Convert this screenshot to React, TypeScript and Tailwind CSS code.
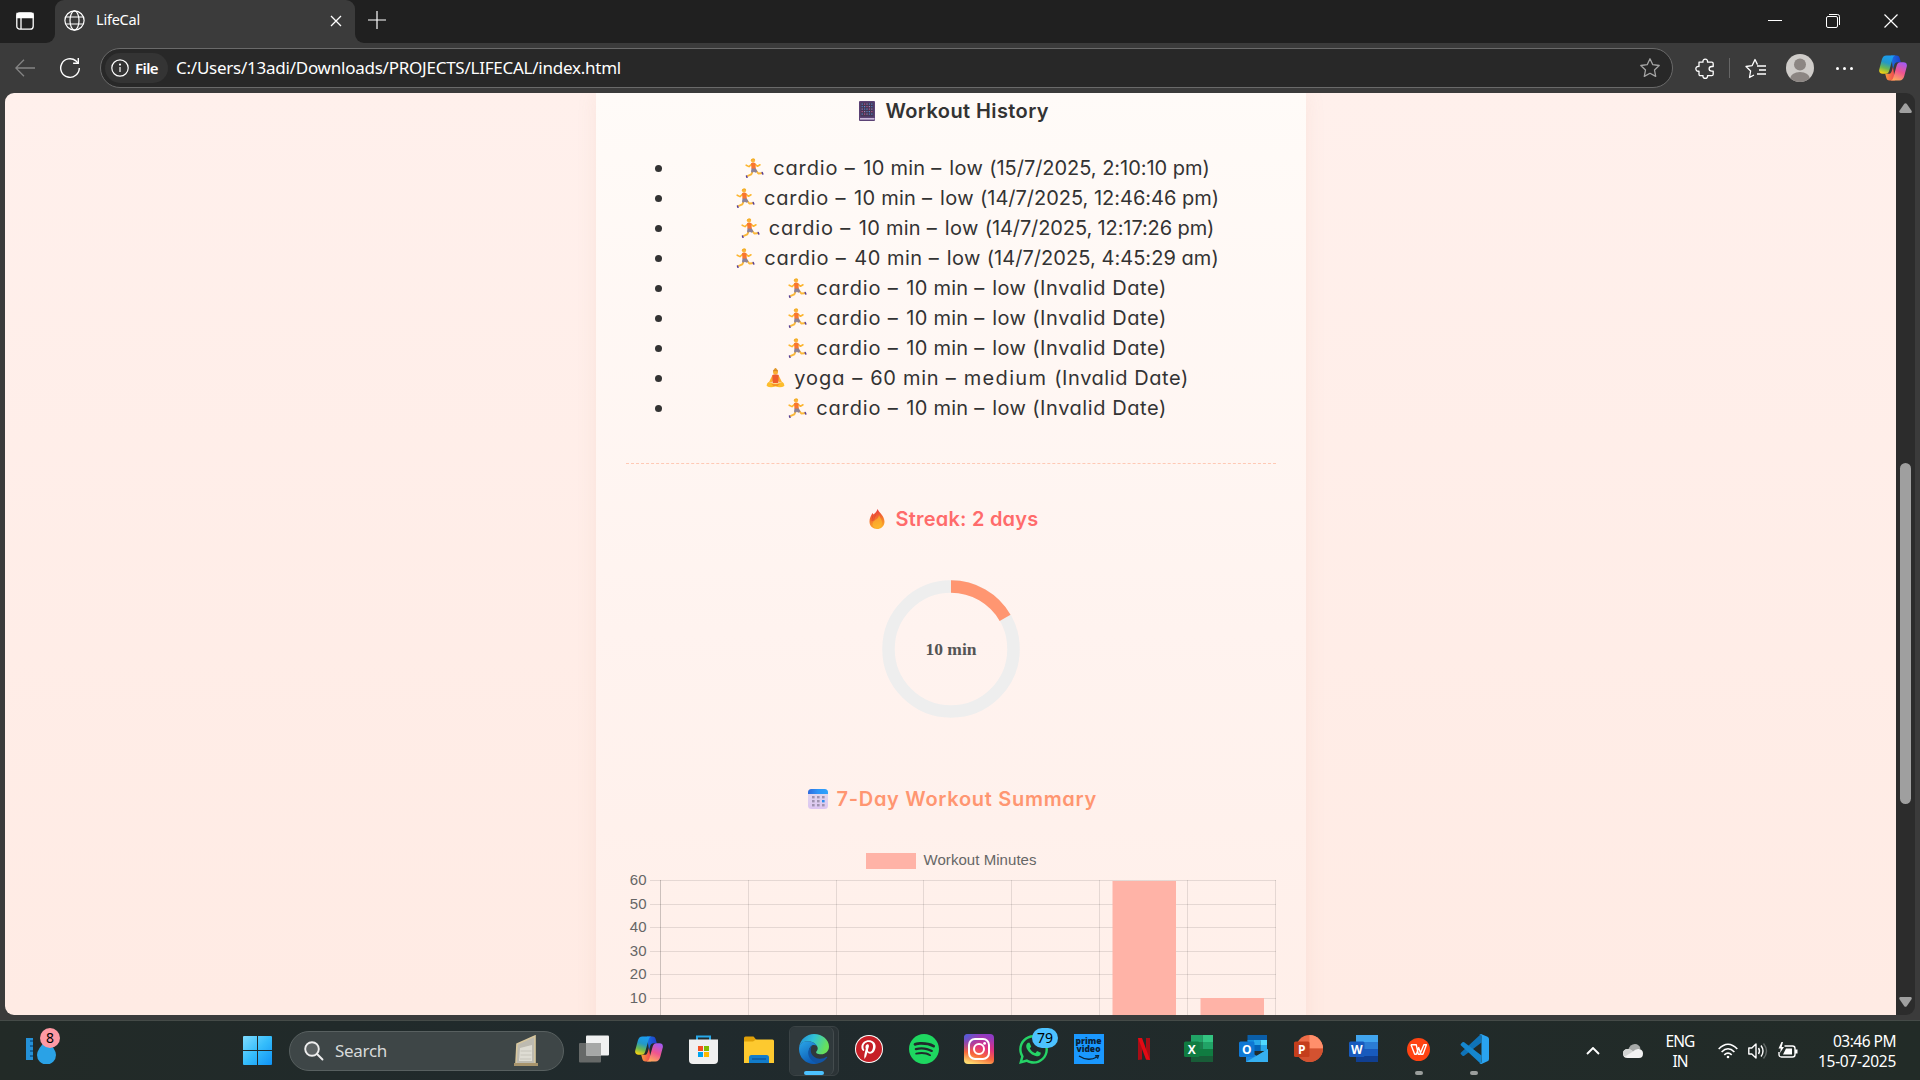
import React, { useLayoutEffect, useRef, useState } from "react";
import { SiSpotify } from "react-icons/si";
import { FaPinterestP, FaWhatsapp } from "react-icons/fa";

/* Text set to an exact measure by adjusting its tracking. */
function Fit({ w, children, className = "" }: { w: number; children: string; className?: string }) {
  const ref = useRef<HTMLSpanElement>(null);
  const [tracking, setTracking] = useState(0);
  useLayoutEffect(() => {
    if (ref.current) {
      const natural = ref.current.getBoundingClientRect().width;
      setTracking((w - natural) / children.length);
    }
  }, []);
  return (
    <span ref={ref} className={`inline-block shrink-0 whitespace-pre ${className}`} style={{ letterSpacing: tracking }}>
      {children}
    </span>
  );
}

const ui = "font-['Noto_Sans','Open_Sans',sans-serif]";
const body = "font-['Inter',sans-serif] [font-feature-settings:'cv11']";

function Runner() {
  return (
    <svg width="19" height="20" viewBox="0 0 19 20" className="shrink-0" fill="none">
      <path d="M8 12.500 6.300 16.300 2.800 17.800" stroke="#fbb83a" strokeWidth="1.900" strokeLinecap="round" strokeLinejoin="round" />
      <path d="M11 12.500 13.300 15.500 16.300 15.300" stroke="#fbb83a" strokeWidth="1.900" strokeLinecap="round" strokeLinejoin="round" />
      <path d="M6.500 6.300 4 8.600 1.200 7.200M10.500 6.500l2 1.800L15 6.800" stroke="#fcb62f" strokeWidth="1.600" strokeLinecap="round" strokeLinejoin="round" />
      <path d="M6 5.200q2-1.200 4.500 0l.3 5.800H6.500z" fill="#f9752f" />
      <path d="M6.500 10.500h4.300l1.700 3-2 1.300-1.700-1-1.800 1-1-1.300z" fill="#8d8296" />
      <path d="M1.500 18 2 19.400M17.200 14.500l.6 1.600" stroke="#5a3f91" strokeWidth="1.500" strokeLinecap="round" />
      <circle cx="8" cy="2.600" r="2.100" fill="#fbb43f" />
      <path d="M5.800 2.800C5.600.5 9.600-.4 10.200 2L8 1.900z" fill="#f3b02c" />
    </svg>
  );
}

function Yoga() {
  return (
    <svg width="19" height="20" viewBox="0 0 19 20" className="shrink-0">
      <path d="M6.500 7 2.800 14.500h3.200L8 11zM12.500 7l3.700 7.500H13L11 11z" fill="#fcb02f" />
      <path d="M6.300 7q3.200-1.600 6.400 0l-.4 8H6.700z" fill="#ee5d2c" />
      <path d="M2.500 14q7 3 14 0 2.300 2 1.700 4-3 2.300-8.700.6-5.700 1.700-8.700-.6-.6-2 1.700-4z" fill="#fdbd2c" />
      <path d="M5 15.500q4.500 1.500 9 0l-2.500 2.500h-4z" fill="#f79324" />
      <circle cx="9.500" cy="3.900" r="2.500" fill="#fbb030" />
      <path d="M7 3.600a2.500 2.500 0 0 1 5 0q-2.500-1.200-5 0z" fill="#d78a26" />
      <circle cx="9.500" cy="1.200" r="1.100" fill="#e3992a" />
    </svg>
  );
}

function Book() {
  return (
    <svg width="16" height="20" viewBox="0 0 16 20" className="shrink-0">
      <rect width="16" height="20" rx="1" fill="#5b4275" />
      <rect x="1" y="17.200" width="14.500" height="1.300" fill="#e6d7f3" />
      <rect x="1.500" y="1.500" width="13" height="14" fill="#453655" />
      {[2.5, 5, 7.5, 10, 12.5].map((y, i) =>
        [2.6, 5, 7.4, 9.8, 12.2].map((x, j) => (
          <rect key={`${x}-${y}`} x={x} y={y} width="1.200" height="1.200" fill={["#5b8fd0", "#b9578c", "#9a86b8", "#4e7fc4"][(i * 3 + j) % 4]} />
        )),
      )}
    </svg>
  );
}

function Fire() {
  return (
    <svg width="16" height="20" viewBox="0 0 16 20" className="shrink-0">
      <defs>
        <linearGradient id="fire" x1="0.400" y1="0" x2="0.600" y2="1">
          <stop offset="0" stopColor="#e8363f" />
          <stop offset=".5" stopColor="#f4742d" />
          <stop offset="1" stopColor="#fdb52b" />
        </linearGradient>
      </defs>
      <path d="M8.500 0C10 3.500 15.500 7 15.500 12.700 15.500 17.200 12 20 8 20S.5 17.200.5 12.500C.5 9 2 6.500 3.500 4l1 1.500C6.500 4 8 2 8.500 0z" fill="url(#fire)" />
      <path d="M10 6c1 3 3.500 5 3 8.500-.5 3-2.500 4.500-5 4.500s-4.500-1.500-4.500-4 2-3.500 3.500-4.500S9.800 8 10 6z" fill="#fdbf2d" opacity=".6" />
      <path d="M4.200 6.500C3.500 8.500 3 10 3.200 12M6.800 5.500C5.500 8 4.600 9.500 4.800 11.500" stroke="#e2452f" strokeWidth=".9" fill="none" />
    </svg>
  );
}

function Calendar() {
  return (
    <svg width="20" height="20" viewBox="0 0 20 20" className="shrink-0">
      <defs>
        <linearGradient id="calTop"><stop stopColor="#2f6bdc" /><stop offset=".5" stopColor="#2e95f8" /><stop offset="1" stopColor="#2ea3fb" /></linearGradient>
        <linearGradient id="calBody" x2="0" y2="1"><stop stopColor="#e3dcec" /><stop offset="1" stopColor="#dcc5f2" /></linearGradient>
      </defs>
      <rect width="20" height="20" rx="3.500" fill="url(#calBody)" />
      <path d="M0 5V3.500A3.500 3.500 0 0 1 3.500 0h13A3.500 3.500 0 0 1 20 3.500V5z" fill="url(#calTop)" />
      {[7, 11, 15].map((y) => [4, 9, 14].map((x) => <rect key={`${x}-${y}`} x={x} y={y} width="2.600" height="2.400" fill={x === 14 && y === 11 ? "#2d8ff0" : "#a093b0"} />))}
    </svg>
  );
}

function Copilot({ id }: { id: string }) {
  return (
    <svg width="28" height="26" viewBox="0 0 28 26">
      <defs>
        <linearGradient id={`${id}a`} x1="0.600" y1="0" x2="0.300" y2="1">
          <stop offset="0" stopColor="#1b9df2" /><stop offset=".4" stopColor="#2398c8" /><stop offset=".7" stopColor="#6bb852" /><stop offset="1" stopColor="#f7d211" />
        </linearGradient>
        <linearGradient id={`${id}b`} x1="0.700" y1="0" x2="0.300" y2="1">
          <stop offset="0" stopColor="#a45af2" /><stop offset=".5" stopColor="#f0548f" /><stop offset="1" stopColor="#fdab5c" />
        </linearGradient>
        <linearGradient id={`${id}c`} x2="1"><stop stopColor="#1c6fe0" /><stop offset="1" stopColor="#1d3fc9" /></linearGradient>
        <linearGradient id={`${id}d`} x2="1"><stop stopColor="#f89a3a" /><stop offset="1" stopColor="#ee4253" /></linearGradient>
      </defs>
      <path d="M12 .5h5.500c2 0 2.800 1.200 3.300 3l1 3.700h-3.500c-1.600 0-2.500 1-3 2.600l-1.300 4.200z" fill={`url(#${id}c)`} />
      <path d="M16 25.500h-5.500c-2 0-2.800-1.200-3.300-3l-1-3.700h3.500c1.600 0 2.500-1 3-2.600L14 12z" fill={`url(#${id}d)`} />
      <path d="M7.500.5h9c-1.700.3-2.400 1.500-2.900 3.200L10.300 15.500c-.6 2-1.500 3.300-3.600 3.300H3.500c-2.600 0-3.900-1.800-3.200-4.600l2.500-9.500C3.500 2 5 .5 7.500.5z" fill={`url(#${id}a)`} />
      <path d="M20.500 25.500h-9c1.700-.3 2.400-1.500 2.900-3.200l3.300-11.800c.6-2 1.500-3.300 3.600-3.300h3.200c2.600 0 3.900 1.800 3.200 4.600l-2.500 9.500c-.7 2.700-2.200 4.200-4.700 4.200z" fill={`url(#${id}b)`} />
    </svg>
  );
}

function Star({ color }: { color: string }) {
  return (
    <svg width="22" height="22" viewBox="0 0 22 22" fill="none" stroke={color} strokeWidth="1.300" strokeLinejoin="round">
      <path d="m11 1.800 2.800 5.900 6.400.8-4.700 4.500 1.200 6.400-5.700-3.100-5.700 3.100 1.200-6.400L1.800 8.500l6.400-.8z" />
    </svg>
  );
}

function TitleBar() {
  return (
    <div className="flex h-[43px] shrink-0 bg-[#3b3b3b]">
      <div className="flex w-[55px] items-center rounded-br-[9px] bg-[#202020] pl-4 pb-[2px]">
        <svg width="18" height="18" viewBox="0 0 18 18" fill="none" stroke="#fff" strokeWidth="1.300">
          <rect x=".8" y=".8" width="16.400" height="16.400" rx="3" />
          <path d="M1 1.500h16v4H1z" fill="#fff" />
          <path d="M5 5v12" />
        </svg>
      </div>
      <div className="flex bg-[#202020]">
        <div className="flex h-[43px] w-[300px] items-center rounded-t-[9px] bg-[#3b3b3b] pb-[3px]">
          <svg width="21" height="21" viewBox="0 0 21 21" fill="none" stroke="#fff" strokeWidth="1.200" className="ml-[9px]">
            <circle cx="10.500" cy="10.500" r="9.600" />
            <ellipse cx="10.500" cy="10.500" rx="4.500" ry="9.600" />
            <path d="M1.700 7h17.600M1.700 14h17.600" />
          </svg>
          <Fit w={44} className={`${ui} ml-[11px] text-[14.500px] text-white`}>LifeCal</Fit>
          <svg width="12" height="12" viewBox="0 0 12 12" stroke="#fff" strokeWidth="1.300" className="mt-[2px] mr-[13px] ml-auto"><path d="m1 1 10 10M11 1 1 11" /></svg>
        </div>
      </div>
      <div className="flex flex-1 items-center rounded-bl-[9px] bg-[#202020] pb-[3px]">
        <svg width="18" height="18" viewBox="0 0 18 18" stroke="#fff" strokeWidth="1.200" className="ml-[13px]"><path d="M9 0v18M0 9h18" /></svg>
        <div className="mr-[22px] ml-auto flex items-center gap-[44px]">
          <svg width="14" height="14" viewBox="0 0 14 14" stroke="#fff"><path d="M0 7.500h14" /></svg>
          <svg width="14" height="14" viewBox="0 0 14 14" stroke="#fff" fill="none" className="mt-[2px]"><rect x=".5" y="2.500" width="11" height="11" rx="1.500" /><path d="M3 .5h8.500a2 2 0 0 1 2 2V11" /></svg>
          <svg width="14" height="14" viewBox="0 0 14 14" stroke="#fff" strokeWidth="1.200" className="mt-[2px]"><path d="m.5.5 13 13M13.500.5l-13 13" /></svg>
        </div>
      </div>
    </div>
  );
}

function Toolbar() {
  return (
    <div className="flex h-[50px] shrink-0 items-center bg-[#3b3b3b]">
      <svg width="20" height="18" viewBox="0 0 20 18" fill="none" stroke="#858585" strokeWidth="1.300" className="ml-[15px]"><path d="M9 .8.8 9 9 17.200M1 9h19" /></svg>
      <svg width="22" height="22" viewBox="0 0 22 22" fill="none" stroke="#fff" strokeWidth="1.400" className="ml-[24px]">
        <path d="M20.300 11A9.300 9.300 0 1 1 17 3.900L19 6" /><path d="M19.300 1v5.200h-5.200" />
      </svg>
      <div className="ml-[19px] flex h-10 w-[1573px] items-center rounded-full border border-[#6a6a6a] bg-[#282828] pl-1">
        <div className="flex h-[30px] w-[63px] items-center rounded-full bg-[#343434] pl-[6px]">
          <svg width="18" height="18" viewBox="0 0 18 18" fill="none" stroke="#fff" strokeWidth="1.200"><circle cx="9" cy="9" r="8.200" /><path d="M9 8v5" /><circle cx="9" cy="5.600" r=".5" /></svg>
          <Fit w={23} className={`${ui} ml-[6px] text-[15px] font-semibold text-white`}>File</Fit>
        </div>
        <Fit w={445} className={`${ui} ml-2 text-[17px] text-white`}>C:/Users/13adi/Downloads/PROJECTS/LIFECAL/index.html</Fit>
        <div className="mr-[11px] ml-auto"><Star color="#a5a5a5" /></div>
      </div>
      <svg width="21" height="21" viewBox="0 0 21 21" fill="none" stroke="#fff" strokeWidth="1.300" strokeLinejoin="round" className="ml-[22px]">
        <path d="M4 4.200h4c-.8-4.200 5.300-4.200 4.500 0h4.200q1.500 0 1.500 1.500v2.800h-1.400c-3.600 0-3.600 4.700 0 4.700h1.400v3q0 1.500-1.500 1.500h-4.200c.8 3.500-5.300 3.500-4.500 0H5.500q-1.500 0-1.500-1.500v-3c-4.200.8-4.200-5.500 0-4.700z" />
      </svg>
      <div className="ml-[13px] h-5 w-px bg-[#666]" />
      <svg width="21" height="21" viewBox="0 0 21 21" fill="none" stroke="#fff" strokeWidth="1.300" strokeLinejoin="round" className="ml-[15px]">
        <path d="M9 17 4.500 19.500 5.600 13 1 8.500l6.200-.9L10 1.500l2.500 5.100M12 8h9M14 12h7M12 16h9" />
      </svg>
      <svg width="28" height="28" viewBox="0 0 28 28" className="ml-[20px]">
        <clipPath id="avatar"><circle cx="14" cy="14" r="14" /></clipPath>
        <g clipPath="url(#avatar)"><rect width="28" height="28" fill="#cfccc9" /><circle cx="14" cy="10.500" r="6" fill="#8c8683" /><ellipse cx="14" cy="25" rx="10" ry="7" fill="#8c8683" /></g>
      </svg>
      <div className="ml-[22px] flex gap-1">
        <i className="size-[3px] rounded-full bg-white" /><i className="size-[3px] rounded-full bg-white" /><i className="size-[3px] rounded-full bg-white" />
      </div>
      <div className="ml-[26px]"><Copilot id="tb" /></div>
    </div>
  );
}

type Piece = [string, number];

const cardio = (minutes: string, w: number, tail: string, tailW: number): Piece[] => [
  ["cardio ", 71.5], ["– ", 18.5], [`${minutes} min `, w], ["– ", 18], ["low ", 40], [tail, tailW],
];

const invalid = cardio("10", 68, "(Invalid Date)", 134.5);

const history: { pieces: Piece[]; yoga?: boolean }[] = [
  { pieces: cardio("10", 68, "(15/7/2025, 2:10:10 pm)", 220.5) },
  { pieces: cardio("10", 68, "(14/7/2025, 12:46:46 pm)", 239) },
  { pieces: cardio("10", 68, "(14/7/2025, 12:17:26 pm)", 229.5) },
  { pieces: cardio("40", 74.5, "(14/7/2025, 4:45:29 am)", 232) },
  { pieces: invalid },
  { pieces: invalid },
  { pieces: invalid },
  { pieces: [["yoga ", 58], ["– ", 18], ["60 min ", 75.5], ["– ", 18], ["medium ", 90.5], ["(Invalid Date)", 134.5]], yoga: true },
  { pieces: invalid },
];

function SummaryChart() {
  const ys = [34.5, 58.5, 81.5, 105.5, 128.5, 152.5, 175.5];
  const xs = [34.5, 122.5, 210.5, 297.5, 385.5, 473.5, 561.5, 649.5];
  return (
    <svg width="650" height="240" viewBox="0 0 650 240" className="block font-['Liberation_Sans',sans-serif] text-[15px]" fill="#666">
      <rect x="240" y="7" width="50" height="16" fill="#ffb3a7" />
      <text x="297.500" y="19" textLength="113">Workout Minutes</text>
      {ys.map((y, i) => (
        <g key={y}>
          <path d={`M24 ${y}H650`} stroke="#000" strokeOpacity=".1" />
          <text x="20.500" y={y + 4.5} textAnchor="end">{60 - i * 10}</text>
        </g>
      ))}
      {xs.map((x, i) => <path key={x} d={`M${x} 34V185`} stroke="#000" strokeOpacity={i === 0 ? 0.2 : 0.1} />)}
      <rect x="486.500" y="35" width="63.500" height="141" fill="#ffb3a7" />
      <rect x="574.500" y="152" width="63.500" height="24" fill="#ffb3a7" />
    </svg>
  );
}

function Page() {
  return (
    <div className="flex h-[922px] shrink-0 bg-[#3b3b3b] pr-[5px] pl-[5px]">
      <div className="flex w-[1891px] justify-center overflow-hidden rounded-l-[9px] bg-linear-to-b from-[#fff0ec] to-[#ffebe4]">
        <div className={`${body} h-[1200px] w-[710px] bg-linear-to-b from-[#fffbf8] via-[#fff3ef] via-45% to-[#ffece5] px-[30px] pt-[3px] text-[20px] leading-[30px] text-[#333] shadow-[0_0_20px_rgba(200,120,90,0.09)]`}>
          <div className="flex h-[30px] items-center gap-[10px] pl-[233px]">
            <Book /><Fit w={163.5} className="ml-px font-semibold">Workout History</Fit>
          </div>
          <ul className="mt-[27px]">
            {history.map((h, i) => (
              <li key={i} className="flex h-[30px] items-center pl-[29px]">
                <i className="size-[7px] rounded-full bg-[#333]" />
                <div className="flex flex-1 items-center justify-center gap-[9px] pl-[18px]">
                  {h.yoga ? <Yoga /> : <Runner />}
                  <span className="flex">{h.pieces.map(([text, w], k) => <Fit key={k} w={w}>{text}</Fit>)}</span>
                </div>
              </li>
            ))}
          </ul>
          <div className="mt-[40px] border-t border-dashed border-[#ffc9b5]" />
          <div className="mt-[40px] flex h-[30px] items-center gap-[11px] pl-[243px] text-[#ff6b6b]">
            <Fire /><Fit w={143} className="font-semibold">Streak: 2 days</Fit>
          </div>
          <svg width="150" height="150" viewBox="0 0 150 150" className="mx-auto mt-[40px]" fill="none" strokeWidth="12.500">
            <circle cx="75" cy="75" r="62.500" stroke="#eee" />
            <path d="M75 12.500A62.500 62.500 0 0 1 129.100 43.750" stroke="#ff9671" />
            <text x="49.500" y="80.500" textLength="51" stroke="none" fill="#555" className="font-['Liberation_Serif',serif] text-[17.500px] font-bold">10 min</text>
          </svg>
          <div className="mt-[60px] flex h-[30px] items-center gap-[9px] pl-[182px] text-[#ff9671]">
            <Calendar /><Fit w={260.5} className="font-semibold">7-Day Workout Summary</Fit>
          </div>
          <div className="mt-[32px]"><SummaryChart /></div>
        </div>
      </div>
      <div className="flex w-[19px] flex-col items-center rounded-r-[9px] bg-[#2c2c2c] pt-[10px] pb-[8px]">
        <svg width="13" height="10" viewBox="0 0 13 10" fill="#a0a0a0"><path d="M5.300.8q1.200-1.300 2.400 0l5 7.200q.4 2-1.200 2h-10Q0 10 .3 8z" /></svg>
        <div className="mt-[350px] h-[341px] w-[11px] rounded-full bg-[#9f9f9f]" />
        <svg width="13" height="10" viewBox="0 0 13 10" fill="#a0a0a0" className="mt-auto"><path d="M5.300 9.200q1.200 1.300 2.400 0l5-7.200Q13 0 11.500 0h-10Q0 0 .3 2z" /></svg>
      </div>
    </div>
  );
}

function Office({ letter, tile, children }: { letter: string; tile: string; children: React.ReactNode }) {
  return (
    <svg width="30" height="28" viewBox="0 0 30 28" className="font-['Open_Sans',sans-serif] text-[12px] font-bold">
      {children}
      <rect x="0" y="6.500" width="15.500" height="15.500" rx="1.500" fill={tile} />
      <text x="7.700" y="18.600" textAnchor="middle" fill="#fff">{letter}</text>
    </svg>
  );
}

function Edge() {
  return (
    <svg width="30" height="30" viewBox="0 0 30 30">
      <defs>
        <linearGradient id="edgeTop" x2="1" y2=".3"><stop stopColor="#2389d8" /><stop offset=".5" stopColor="#30c3d8" /><stop offset="1" stopColor="#67e05a" /></linearGradient>
        <linearGradient id="edgeBody" x2="0.500" y2="1"><stop stopColor="#2aa6e8" /><stop offset="1" stopColor="#0d5cb5" /></linearGradient>
      </defs>
      <path d="M.2 13C1.200 5.500 7.500 0 15 0c8.500 0 15 6 15 12.500 0 4.700-3.600 7.800-8 7.800-3.800 0-5.600-1.500-4.600-2.800 1.500-1.800 1.700-3.300.8-5C16.500 9 12.500 7.300 8.500 7.300 4.500 7.300 1.500 9.500.2 13z" fill="url(#edgeTop)" />
      <path d="M0 15C0 9.800 4 7.300 8.500 7.300c4.300 0 8 2 9.600 4.800-1.600-1.300-3.600-1.500-5.200-.7-5.500 3-3.600 14.800 6.400 17.900-1.400.5-2.800.7-4.300.7C6.500 30 0 23.300 0 15z" fill="url(#edgeBody)" />
      <path d="M12.900 11.400c-2.700 4.800-.7 12.600 7.600 13.300 2.700.2 5-.6 7-1.900.6-.4 1 .1.700.6-2 3-5 5.200-8.900 5.900C9.800 27.600 5.700 17.500 12.900 11.400z" fill="#1254a3" />
    </svg>
  );
}

function TaskIcons() {
  const icons = [
    <svg width="30" height="28" viewBox="0 0 30 28"><rect y="8" width="22" height="19.500" rx="1" fill="#666968" /><rect x="7" y=".5" width="23" height="20" rx="1" fill="#f0f1f1" /><path d="M7 8h15v12.500H7z" fill="#a6a8a7" /></svg>,
    <Copilot id="task" />,
    <svg width="29" height="29" viewBox="0 0 29 29"><path d="M8 6V1.500h13V6" fill="none" stroke="#28a8e8" strokeWidth="2" /><path d="M0 4.500h29V25q0 4-4 4H4q-4 0-4-4z" fill="#f0f0f0" /><path d="M9 11h5v5H9z" fill="#f25022" /><path d="M15 11h5v5h-5z" fill="#7fba00" /><path d="M9 17h5v5H9z" fill="#00a4ef" /><path d="M15 17h5v5h-5z" fill="#ffb900" /></svg>,
    <svg width="30" height="27" viewBox="0 0 30 27"><path d="M0 2Q0 .5 1.500.5h8L12.500 4v6H0z" fill="#dfa008" /><path d="M0 5.500h9l3-2h16.500Q30 3.500 30 5v22H0z" fill="#fdc92f" /><path d="M5 27v-5.500Q5 19 7.500 19h15q2.500 0 2.500 2.500V27z" fill="#127cca" /><path d="M8 23h14" stroke="#0a4f94" strokeWidth="1.200" /></svg>,
    <Edge />,
    <span className="flex size-7 items-center justify-center rounded-full bg-white"><span className="flex size-[26px] items-center justify-center rounded-full bg-[#c61f27]"><FaPinterestP size={19} color="#fff" /></span></span>,
    <SiSpotify size={30} color="#1ed760" />,
    <svg width="30" height="30" viewBox="0 0 30 30">
      <defs>
        <linearGradient id="ig" x1=".3" y1="1" x2=".6" y2="0"><stop stopColor="#fedc70" /><stop offset=".3" stopColor="#f8683a" /><stop offset=".6" stopColor="#e0317f" /><stop offset="1" stopColor="#8f3bc4" /></linearGradient>
        <radialGradient id="igBlue" cx="0" cy="0" r=".6"><stop stopColor="#4361e0" /><stop offset="1" stopColor="#4361e0" stopOpacity="0" /></radialGradient>
      </defs>
      <rect width="30" height="30" rx="4" fill="url(#ig)" /><rect width="30" height="30" rx="4" fill="url(#igBlue)" />
      <g fill="none" stroke="#fff" strokeWidth="2"><rect x="5" y="5" width="20" height="20" rx="6" /><circle cx="15" cy="15" r="5" /></g><circle cx="20.600" cy="9.400" r="1.400" fill="#fff" />
    </svg>,
    <span className="relative"><FaWhatsapp size={33} color="#25d366" /><span className="absolute -top-[5px] left-[15px] flex h-5 w-[26px] items-center justify-center rounded-full bg-[#4cc2ff] text-[14px] text-black">79</span></span>,
    <span className="flex size-[30px] flex-col items-center bg-[#1a98ff] pt-[3px] text-[8.500px] leading-[8px] font-black text-[#0b2135]"><span>prime</span><span>video</span><svg width="22" height="6" viewBox="0 0 22 6" fill="none" stroke="#0b2135" strokeWidth="1.300" className="mt-[2px]"><path d="M1 1q9 6 18 1M17 .8l3.500-.2-1 3" /></svg></span>,
    <svg width="12" height="22" viewBox="0 0 12 22"><path d="M0 0h4v21.500L0 22zM8 0h4v22l-4-.5z" fill="#a80d16" /><path d="M0 0h4l8 22-4-.5z" fill="#e50914" /></svg>,
    <Office letter="X" tile="#107c41"><path d="M7 0h11.500v7H7z" fill="#21a366" /><path d="M18.500 0H29v7H18.500z" fill="#33c481" /><path d="M7 7h11.500v7H7z" fill="#18814b" /><path d="M18.500 7H29v7H18.500z" fill="#21a366" /><path d="M7 14h22v7H7z" fill="#107c41" /><path d="M7 21h22v6H7z" fill="#185c37" /></Office>,
    <Office letter="O" tile="#0f78d4"><path d="M8.500 0H28v6H8.500z" fill="#0a5ea8" /><path d="M8.500 5H15v9H8.500z" fill="#1490df" /><path d="M15 5h6.500v5H15z" fill="#28a8ea" /><path d="M21.500 5H28v5h-6.500z" fill="#50d9ff" /><path d="M15 10h6.500v6H15z" fill="#0364b8" /><path d="M21.500 10H28v6h-6.500z" fill="#28a8ea" /><path d="M29 14v13H7V15l11 6z" fill="#1a86dc" /><path d="m29 14-22 13h22z" fill="#36b0f0" /></Office>,
    <Office letter="P" tile="#c43e1c"><circle cx="15.500" cy="13.500" r="13.500" fill="#ed6c47" /><path d="M15.500 0A13.500 13.500 0 0 1 29 13.500H15.500z" fill="#ff8f6b" /><path d="M29 13.500A13.500 13.500 0 0 1 2 13.500z" fill="#d35230" /></Office>,
    <Office letter="W" tile="#185abd"><path d="M7 0h22v7H7z" fill="#41a5ee" /><path d="M7 7h22v7H7z" fill="#2b7cd3" /><path d="M7 14h22v7H7z" fill="#185abd" /><path d="M7 21h22v6H7z" fill="#103f91" /></Office>,
    <svg width="23" height="23" viewBox="0 0 23 23"><circle cx="11.500" cy="11.500" r="11.500" fill="#ff4312" /><path d="M3.800 6.800h5.500l2 9.500h1.600l4-9.500h2.500l-3.500 9.500h-2L11.500 9M4 6.800l3.700 9.500h1.600l2.200-6" fill="none" stroke="#fff" strokeWidth="1.400" strokeLinejoin="round" /></svg>,
    <svg width="30" height="30" viewBox="0 0 30 30"><path d="M22 0 2 18.500q-1 .9 0 1.800l1.500 1.400q.8.700 1.700 0L22.500 8.500z" fill="#0f73b8" /><path d="M22 30 2 11.500q-1-.9 0-1.800l1.500-1.400q.8-.7 1.700 0L22.500 21.500z" fill="#1587cf" /><path d="M22 0q-1.500 0-1.700.8 2.200-1.200 2.200 2v24.400q0 3.200-2.200 2Q21 30.300 22.500 30l6-2.800q1.500-.7 1.500-2.300V5.100q0-1.600-1.500-2.300z" fill="#29a3f0" /></svg>,
  ];
  return (
    <div className="flex">
      {icons.map((icon, i) => (
        <div key={i} className="flex w-[55px] flex-col items-center">
          <div className={i === 4 ? "flex h-[50px] w-[50px] rounded-md border border-[#3b4345] bg-[#2b3336]" : "flex h-[50px] w-[50px] border border-transparent"}>
            <div className={i === 4 ? "flex w-[44px] flex-col items-center rounded-md border-r border-[#444c4e] bg-[#30393c] pl-[5px]" : "flex w-full flex-col items-center"}>
              <div className="flex h-[44px] items-center pt-[5px] pb-[4px]">{icon}</div>
              {i === 4 && <div className="h-1 w-5 rounded-full bg-[#4cc2ff]" />}
              {i > 14 && <div className="h-1 w-2 rounded-full bg-[#9a9e9c]" />}
            </div>
          </div>
        </div>
      ))}
    </div>
  );
}

function Taskbar() {
  return (
    <div className={`${ui} flex h-[60px] items-center border-t border-[#454b48] bg-linear-to-r from-[#222a27] via-[#202a2d] via-35% to-[#222b27] text-white`}>
      <div className="relative ml-[26px] flex w-[30px] items-end">
        <svg width="30" height="26" viewBox="0 0 30 26">
          <path d="M0 0h7v22H0z" fill="#2491d8" /><path d="M4 3h3M4 8h3M4 13h3M4 18h3" stroke="#0b568f" strokeWidth="1.500" />
          <path d="M20.500 2q9.500 9 9.500 15a9.500 9.500 0 0 1-19 0q0-6 9.500-15z" fill="#2aa2e6" />
        </svg>
        <span className="absolute -top-[10px] left-[14px] flex size-5 items-center justify-center rounded-full bg-[#ff99a4] text-[14px] text-black">8</span>
      </div>
      <svg width="29" height="29" viewBox="0 0 29 29" className="ml-[187px]">
        <defs><linearGradient id="win" x2="1" y2="1"><stop stopColor="#7fdcff" /><stop offset=".5" stopColor="#35bdfb" /><stop offset="1" stopColor="#0f92f5" /></linearGradient></defs>
        <path d="M1 0h13v14H0V1q0-1 1-1zM15 0h13q1 0 1 1v13H15zM0 15h14v14H1q-1 0-1-1zM15 15h14v13q0 1-1 1H15z" fill="url(#win)" />
      </svg>
      <div className="mr-[2px] ml-[17px] flex h-10 w-[275px] items-center rounded-full border border-[#586060] bg-[#3e4647]">
        <svg width="20" height="20" viewBox="0 0 20 20" fill="none" stroke="#eee" strokeWidth="1.900" className="ml-[14px]"><circle cx="8" cy="8" r="6.800" fill="#5c6263" /><path d="m13 13 5.500 5.500" strokeLinecap="round" /></svg>
        <Fit w={52} className="ml-[11px] text-[17px] text-[#d8dada]">Search</Fit>
        <svg width="24" height="32" viewBox="0 0 24 32" className="mr-[25px] ml-auto">
          <path d="M3 9 21 1v27H2z" fill="#bdbab0" /><path d="M6 13 18 10v16H5z" fill="#dedcd3" /><path d="M2 28 3 9 21 1v27" fill="none" stroke="#d8c79e" strokeWidth="1.600" /><path d="M6.500 16h11M6.500 20h11M6 24h11" stroke="#c6c4ba" /><path d="M0 28h24v3H0z" fill="#a8946c" />
        </svg>
      </div>
      <TaskIcons />
      <svg width="14" height="8" viewBox="0 0 14 8" fill="none" stroke="#fff" strokeWidth="1.900" className="ml-[85px]"><path d="m1 7 6-6 6 6" /></svg>
      <svg width="20" height="14" viewBox="0 0 20 14" className="ml-[23px]"><path d="M5 6q2-6 7-6 4 0 5.500 4.500L10 9z" fill="#a6a9a8" /><path d="M0 9.500Q0 5 5 5q3 0 5 2.500 2.500-3 6-2.500 4 .7 4 4.500Q20 14 16 14H4.500Q0 14 0 9.500z" fill="#f2f2f2" /><path d="M0 9.500Q0 5 5 5q3 0 5 2.500L2 12.500Q0 11.500 0 9.500z" fill="#d2d4d3" /></svg>
      <div className="ml-[22px] flex w-[30px] flex-col items-center text-[15.500px] leading-[20px]"><Fit w={29}>ENG</Fit><Fit w={15}>IN</Fit></div>
      <svg width="20" height="16" viewBox="0 0 20 16" fill="none" stroke="#fff" strokeWidth="1.600" className="ml-[23px]"><path d="M.7 6q9.300-9.500 18.600 0M3.600 9q6.400-6.500 12.800 0M6.300 11.800q3.700-3.500 7.400 0" /><circle cx="10" cy="14" r="1.300" fill="#fff" stroke="none" /></svg>
      <svg width="20" height="18" viewBox="0 0 20 18" fill="none" stroke="#fff" strokeWidth="1.400" strokeLinejoin="round" className="ml-[10px]"><path d="M.8 6h3L8 2v14l-4.200-4h-3z" /><path d="M10.500 6q2 3 0 6M13 3.500q4 5.500 0 11" /><path d="M15.500 1.500q6 7.500 0 15" stroke="#626967" /></svg>
      <svg width="20" height="18" viewBox="0 0 20 18" fill="none" stroke="#fff" strokeWidth="1.400" className="ml-[10px]"><path d="M6.500 4h8Q17 4 17 6.500v6q0 2.500-2.500 2.500h-11Q1 15 1 12.500V10" /><path d="M5 12.500 8 6.500h6v6z" fill="#fff" stroke="none" /><path d="M17 7.500h2.500v4H17z" fill="#fff" stroke="none" /><path d="M3.500 0 .5 6.500h2.300L2 11l4-6H3.700l1.300-5z" fill="#fff" stroke="none" /></svg>
      <div className="mr-[24px] ml-auto flex flex-col items-end text-[15.500px] leading-[20px]"><Fit w={63}>03:46 PM</Fit><Fit w={78}>15-07-2025</Fit></div>
    </div>
  );
}

export default function App() {
  return (
    <div className="flex h-[1080px] w-[1920px] flex-col overflow-hidden bg-[#3b3b3b]">
      <TitleBar />
      <Toolbar />
      <Page />
      <div className="h-[5px] shrink-0 bg-[#3b3b3b]" />
      <Taskbar />
    </div>
  );
}
